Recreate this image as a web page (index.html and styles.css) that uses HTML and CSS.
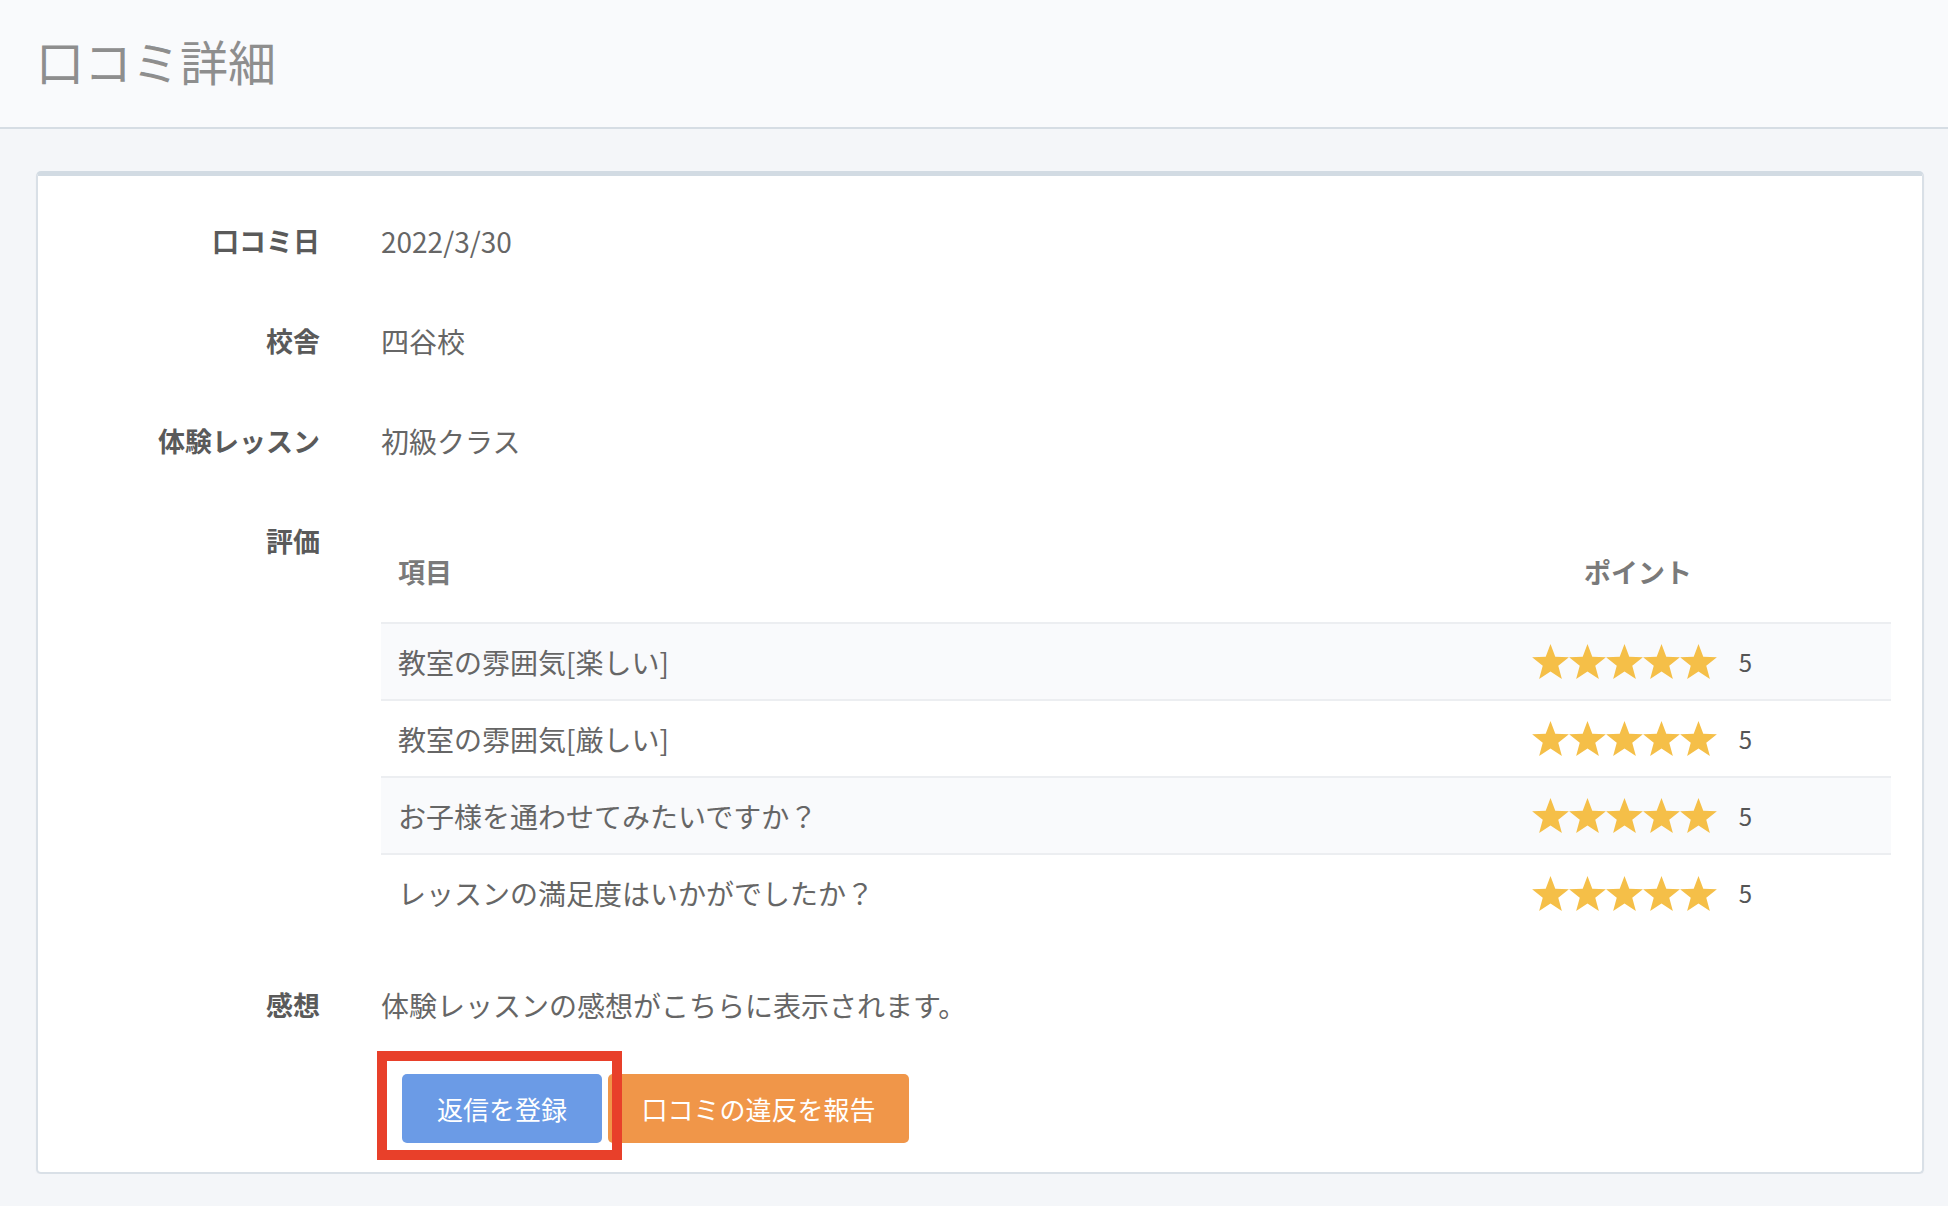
FILE: index.html
```html
<!DOCTYPE html>
<html lang="ja">
<head>
<meta charset="utf-8">
<title>口コミ詳細</title>
<link rel="stylesheet" href="styles.css">
</head>
<body>
<header class="page-header">
  <h1 class="page-title">口コミ詳細</h1>
</header>
<main class="content">
  <section class="card">
    <div class="detail">
      <div class="label">口コミ日</div>
      <div class="value">2022/3/30</div>

      <div class="label">校舎</div>
      <div class="value">四谷校</div>

      <div class="label">体験レッスン</div>
      <div class="value">初級クラス</div>

      <div class="label">評価</div>
      <div class="value">
        <table class="rating-table">
          <thead>
            <tr><th class="col-item">項目</th><th class="col-point">ポイント</th></tr>
          </thead>
          <tbody>
            <tr>
              <td class="col-item">教室の雰囲気[楽しい]</td>
              <td class="col-point"><div class="points"><span class="stars"><svg viewBox="0 0 37 35.2"><polygon points="18.5,0 23.32,12.82 37,13.44 26.3,21.98 29.93,35.19 18.5,27.65 7.07,35.19 10.7,21.98 0,13.44 13.68,12.82"/></svg><svg viewBox="0 0 37 35.2"><polygon points="18.5,0 23.32,12.82 37,13.44 26.3,21.98 29.93,35.19 18.5,27.65 7.07,35.19 10.7,21.98 0,13.44 13.68,12.82"/></svg><svg viewBox="0 0 37 35.2"><polygon points="18.5,0 23.32,12.82 37,13.44 26.3,21.98 29.93,35.19 18.5,27.65 7.07,35.19 10.7,21.98 0,13.44 13.68,12.82"/></svg><svg viewBox="0 0 37 35.2"><polygon points="18.5,0 23.32,12.82 37,13.44 26.3,21.98 29.93,35.19 18.5,27.65 7.07,35.19 10.7,21.98 0,13.44 13.68,12.82"/></svg><svg viewBox="0 0 37 35.2"><polygon points="18.5,0 23.32,12.82 37,13.44 26.3,21.98 29.93,35.19 18.5,27.65 7.07,35.19 10.7,21.98 0,13.44 13.68,12.82"/></svg></span><span class="score">5</span></div></td>
            </tr>
            <tr>
              <td class="col-item">教室の雰囲気[厳しい]</td>
              <td class="col-point"><div class="points"><span class="stars"><svg viewBox="0 0 37 35.2"><polygon points="18.5,0 23.32,12.82 37,13.44 26.3,21.98 29.93,35.19 18.5,27.65 7.07,35.19 10.7,21.98 0,13.44 13.68,12.82"/></svg><svg viewBox="0 0 37 35.2"><polygon points="18.5,0 23.32,12.82 37,13.44 26.3,21.98 29.93,35.19 18.5,27.65 7.07,35.19 10.7,21.98 0,13.44 13.68,12.82"/></svg><svg viewBox="0 0 37 35.2"><polygon points="18.5,0 23.32,12.82 37,13.44 26.3,21.98 29.93,35.19 18.5,27.65 7.07,35.19 10.7,21.98 0,13.44 13.68,12.82"/></svg><svg viewBox="0 0 37 35.2"><polygon points="18.5,0 23.32,12.82 37,13.44 26.3,21.98 29.93,35.19 18.5,27.65 7.07,35.19 10.7,21.98 0,13.44 13.68,12.82"/></svg><svg viewBox="0 0 37 35.2"><polygon points="18.5,0 23.32,12.82 37,13.44 26.3,21.98 29.93,35.19 18.5,27.65 7.07,35.19 10.7,21.98 0,13.44 13.68,12.82"/></svg></span><span class="score">5</span></div></td>
            </tr>
            <tr>
              <td class="col-item">お子様を通わせてみたいですか？</td>
              <td class="col-point"><div class="points"><span class="stars"><svg viewBox="0 0 37 35.2"><polygon points="18.5,0 23.32,12.82 37,13.44 26.3,21.98 29.93,35.19 18.5,27.65 7.07,35.19 10.7,21.98 0,13.44 13.68,12.82"/></svg><svg viewBox="0 0 37 35.2"><polygon points="18.5,0 23.32,12.82 37,13.44 26.3,21.98 29.93,35.19 18.5,27.65 7.07,35.19 10.7,21.98 0,13.44 13.68,12.82"/></svg><svg viewBox="0 0 37 35.2"><polygon points="18.5,0 23.32,12.82 37,13.44 26.3,21.98 29.93,35.19 18.5,27.65 7.07,35.19 10.7,21.98 0,13.44 13.68,12.82"/></svg><svg viewBox="0 0 37 35.2"><polygon points="18.5,0 23.32,12.82 37,13.44 26.3,21.98 29.93,35.19 18.5,27.65 7.07,35.19 10.7,21.98 0,13.44 13.68,12.82"/></svg><svg viewBox="0 0 37 35.2"><polygon points="18.5,0 23.32,12.82 37,13.44 26.3,21.98 29.93,35.19 18.5,27.65 7.07,35.19 10.7,21.98 0,13.44 13.68,12.82"/></svg></span><span class="score">5</span></div></td>
            </tr>
            <tr>
              <td class="col-item">レッスンの満足度はいかがでしたか？</td>
              <td class="col-point"><div class="points"><span class="stars"><svg viewBox="0 0 37 35.2"><polygon points="18.5,0 23.32,12.82 37,13.44 26.3,21.98 29.93,35.19 18.5,27.65 7.07,35.19 10.7,21.98 0,13.44 13.68,12.82"/></svg><svg viewBox="0 0 37 35.2"><polygon points="18.5,0 23.32,12.82 37,13.44 26.3,21.98 29.93,35.19 18.5,27.65 7.07,35.19 10.7,21.98 0,13.44 13.68,12.82"/></svg><svg viewBox="0 0 37 35.2"><polygon points="18.5,0 23.32,12.82 37,13.44 26.3,21.98 29.93,35.19 18.5,27.65 7.07,35.19 10.7,21.98 0,13.44 13.68,12.82"/></svg><svg viewBox="0 0 37 35.2"><polygon points="18.5,0 23.32,12.82 37,13.44 26.3,21.98 29.93,35.19 18.5,27.65 7.07,35.19 10.7,21.98 0,13.44 13.68,12.82"/></svg><svg viewBox="0 0 37 35.2"><polygon points="18.5,0 23.32,12.82 37,13.44 26.3,21.98 29.93,35.19 18.5,27.65 7.07,35.19 10.7,21.98 0,13.44 13.68,12.82"/></svg></span><span class="score">5</span></div></td>
            </tr>
          </tbody>
        </table>
      </div>

      <div class="label">感想</div>
      <div class="value">体験レッスンの感想がこちらに表示されます。</div>
    </div>
    <div class="actions">
      <button class="btn btn-primary highlighted" type="button">返信を登録</button>
      <button class="btn btn-warning" type="button">口コミの違反を報告</button>
    </div>
  </section>
</main>
</body>
</html>
```

FILE: styles.css
```css
* {
  box-sizing: border-box;
}

body {
  margin: 0;
  background: #f4f6f9;
  font-family: "Noto Sans CJK JP", "Noto Sans", sans-serif;
  color: #666;
}

.page-header {
  height: 129px;
  background: #f9fafc;
  border-bottom: 2px solid #d6dde4;
  padding: 32px 0 0 36px;
}

.page-title {
  margin: 0;
  font-size: 48px;
  line-height: 56px;
  font-weight: 400;
  color: #8e8e8e;
}

.content {
  padding: 42px 24px 0 36px;
}

.card {
  background: #fff;
  border: 2px solid #d9e0e7;
  border-top: 5px solid #d2dbe3;
  border-radius: 5px;
  padding: 45px 31px 29px 0;
  box-shadow: 0 1px 2px rgba(0, 0, 0, 0.04);
}

.detail {
  display: grid;
  grid-template-columns: 282px 1fr;
  column-gap: 61px;
  row-gap: 60px;
  font-size: 28px;
  line-height: 40px;
}

.label {
  text-align: right;
  font-weight: 700;
  font-size: 27px;
  color: #5a5a5a;
}

.value {
  color: #666;
}

.rating-table {
  width: 100%;
  border-collapse: collapse;
  margin-top: 13px;
  margin-bottom: -6px;
  font-size: 28px;
  line-height: 40px;
}

.rating-table th {
  height: 88px;
  padding: 18px 17px 30px;
  font-weight: 700;
  font-size: 27px;
  color: #7a7a7a;
  text-align: left;
  vertical-align: top;
}

.rating-table td {
  height: 77px;
  padding: 0 17px;
  border-top: 2px solid #eceef1;
  color: #666;
  vertical-align: middle;
}

.rating-table tbody tr:nth-child(odd) {
  background: #f9fafc;
}

.rating-table .col-point {
  width: 506px;
  text-align: center;
}

.points {
  display: flex;
  justify-content: center;
  align-items: center;
  height: 40px;
  padding-left: 8px;
}

.stars {
  display: flex;
}

.stars svg {
  width: 37px;
  height: 35px;
  display: block;
  fill: #f5bf48;
}

.score {
  margin-left: 22px;
  font-size: 24px;
  line-height: 40px;
  color: #555;
}

.actions {
  display: flex;
  gap: 6px;
  margin: 49px 0 0 364px;
}

.btn {
  height: 69px;
  padding: 0 34px;
  border: none;
  border-radius: 5px;
  font-family: inherit;
  font-size: 26px;
  color: #fff;
  cursor: pointer;
}

.btn-primary {
  background: #6b9be6;
  width: 200px;
}

.btn-warning {
  background: #f09649;
  width: 301px;
  padding: 0;
}

.highlighted {
  position: relative;
}

.highlighted::after {
  content: "";
  position: absolute;
  top: -23px;
  right: -20px;
  bottom: -17px;
  left: -25px;
  border: 10px solid #e8402a;
  pointer-events: none;
  z-index: 2;
}
```
